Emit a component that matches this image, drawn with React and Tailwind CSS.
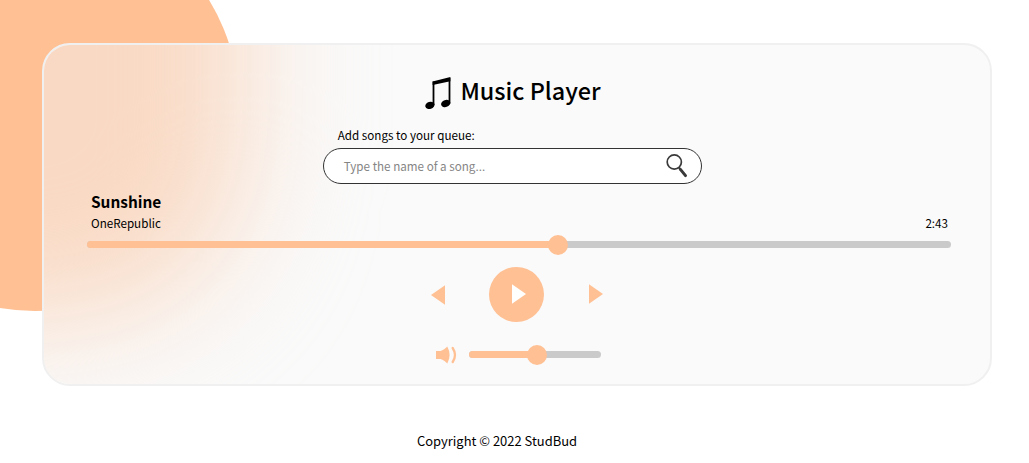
import React from "react";

function MusicNote() {
  return (
    <svg className="mt-px h-8 w-[26px] shrink-0" viewBox="0 0 26 32" fill="#000">
      <path d="M7.600 4.400 25.400 0v4.200L7.600 8z" />
      <path d="M7.6 4.4h1.800v23.600H7.6zM23.600 1h1.800v25.400h-1.800z" />
      <ellipse cx="4.900" cy="28.300" rx="4.700" ry="3.500" transform="rotate(-18 4.900 28.300)" />
      <ellipse cx="20.700" cy="26.500" rx="4.700" ry="3.500" transform="rotate(-18 20.700 26.500)" />
    </svg>
  );
}

function SearchIcon() {
  return (
    <svg className="h-[24px] w-[22px] shrink-0" viewBox="0 0 22 24" fill="none" stroke="#3a3a3a">
      <circle cx="8.300" cy="8" r="7.1" strokeWidth="1.700" />
      <path d="m12.600 13.2 2 2.600" strokeWidth="2" />
      <path d="m14.400 15.4 5.100 6.200" strokeWidth="3" strokeLinecap="round" />
    </svg>
  );
}

function VolumeIcon() {
  return (
    <svg className="h-[18px] w-[21px] shrink-0" viewBox="0 0 21 18" fill="#ffc094">
      <path d="M0 5h4.500c2.600-.7 4.700-2.500 6.800-4.500q4.600 8.500 0 17C9.200 15.300 7.100 13.600 4.500 13H0z" />
      <path d="M16.700 2q4.600 7 0 14" fill="none" stroke="#ffc094" strokeWidth="2.300" strokeLinecap="round" />
    </svg>
  );
}

function Slider({ value, className }) {
  return (
    <div className={`relative flex h-5 items-center ${className}`}>
      <div className="h-[6.500px] w-full overflow-hidden rounded-full bg-[#cacaca]">
        <div className="h-full bg-[#ffc094]" style={{ width: `${value}%` }} />
      </div>
      <div
        className="absolute top-0 h-5 w-5 -translate-x-1/2 rounded-full bg-[#ffc094]"
        style={{ left: `${value}%` }}
      />
    </div>
  );
}

export default function App() {
  return (
    <div
      className="relative h-[463px] overflow-hidden bg-white pt-[43px] text-black"
      style={{ fontFamily: '"Noto Sans CJK JP", "Noto Sans CJK SC", sans-serif' }}
    >
      <div className="absolute -left-[170px] -top-[98px] h-[409px] w-[409px] rounded-full bg-[#ffc094]" />

      <main className="relative isolate ml-[41.500px] flex h-[342.500px] w-[950.500px] flex-col items-center overflow-hidden rounded-[28px] border-2 border-[#f0f0f0] bg-[#fafafa] pt-[26px]">
        <div className="absolute -left-[300px] -top-[300px] -z-10 h-[574px] w-[500px] rounded-br-[170px] bg-[#f9d9c3] blur-[62px]" />

        <h1 className="mr-[8px] flex h-[42px] items-center gap-[9.500px] text-[23.400px] font-medium leading-[38px]">
          <MusicNote />
          <span className="-mt-1">Music Player</span>
        </h1>

        <div className="mr-[9px] mt-[12px] w-[379px]">
          <label className="block pl-[15px] text-[11.650px] leading-5">Add songs to your queue:</label>
          <div className="mt-[3px] flex h-9 items-center justify-between rounded-full border border-[#333] bg-white pl-[20px] pr-[13px]">
            <span className="text-[11.650px] leading-5 text-[#858585]">Type the name of a song...</span>
            <SearchIcon />
          </div>
        </div>

        <div className="mt-[6px] flex w-full items-end justify-between pl-[47.500px] pr-[42px]">
          <div>
            <div className="pb-px text-[15.400px] font-bold leading-[22px]">Sunshine</div>
            <div className="text-[11.650px] leading-5">OneRepublic</div>
          </div>
          <div className="text-[11.650px] leading-5">2:43</div>
        </div>

        <Slider value={54.500} className="ml-[4.500px] mt-[1.500px] w-[864px]" />

        <div className="mt-[12px] flex h-[55px] w-[172px] items-center justify-between">
          <svg className="mt-px h-5 w-[14px]" viewBox="0 0 14 20" fill="#ffc094">
            <path d="M14 .3v19.400L0 10z" />
          </svg>
          <div className="flex h-[55px] w-[55px] items-center justify-center rounded-full bg-[#ffc094]">
            <svg className="ml-1 h-5 w-[14px]" viewBox="0 0 14 20" fill="#fff">
              <path d="M0 .3v19.400L14 10z" />
            </svg>
          </div>
          <svg className="h-5 w-[14px]" viewBox="0 0 14 20" fill="#ffc094">
            <path d="M0 .3v19.400L14 10z" />
          </svg>
        </div>

        <div className="ml-[3px] mt-[23px] flex items-center gap-[12px]">
          <VolumeIcon />
          <Slider value={51.500} className="w-[132px]" />
        </div>
      </main>

      <footer className="mt-[44.500px] pr-[35px] text-center text-[12.950px] leading-[22px]">
        Copyright © 2022 StudBud
      </footer>
    </div>
  );
}
